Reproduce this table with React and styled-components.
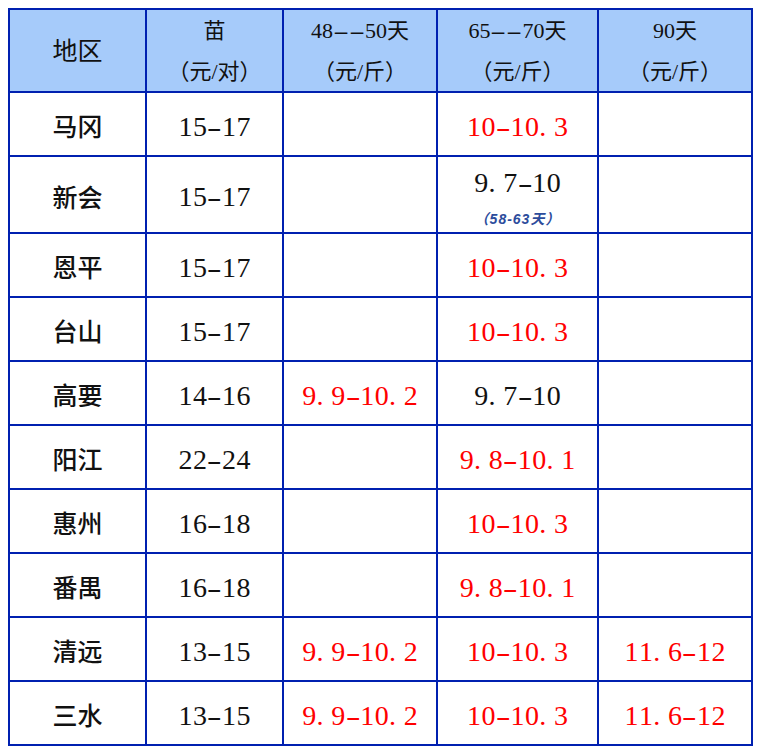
import React from "react";
import styled, { createGlobalStyle } from "styled-components";

const GlobalStyle = createGlobalStyle`
  body {
    margin: 8px;
    background: #ffffff;
    font-family: "Liberation Serif", "Noto Sans CJK SC", serif;
    color: #111111;
  }
`;

const Sheet = styled.div`
  display: grid;
  grid-template-columns: 135px 135px 152px 159px 152px;
  grid-template-rows: 81px 62px 75px repeat(8, 62px);
  gap: 2px;
  padding: 2px;
  width: max-content;
  background: #0020b0;
`;

const Cell = styled.div`
  display: flex;
  flex-direction: column;
  align-items: center;
  justify-content: center;
  background: ${(props) => (props.$head ? "#a6cbfa" : "#ffffff")};
  padding-top: ${(props) => (props.$head ? "0" : "5px")};
`;

const HeadLine = styled.div`
  font-size: 22px;
  line-height: 41px;
  white-space: nowrap;
`;

const RegionHead = styled.div`
  font-family: "Noto Sans CJK SC", sans-serif;
  font-size: 25px;
  line-height: 30px;
  margin-top: -4px;
`;

const Place = styled.div`
  font-family: "Noto Sans CJK SC", sans-serif;
  font-size: 25px;
  line-height: 28px;
  font-weight: 500;
  margin-top: -3px;
  color: #111111;
`;

const Value = styled.div`
  font-size: 28px;
  line-height: 28px;
  white-space: nowrap;
  color: ${(props) => (props.$red ? "#ff0000" : "#111111")};
`;

const Note = styled.div`
  font-family: "Liberation Sans", "Noto Sans CJK SC", sans-serif;
  font-size: 14px;
  font-style: italic;
  font-weight: bold;
  letter-spacing: 1px;
  line-height: 14px;
  margin-top: 15px;
  color: #2c4c9c;
`;

const Ch = styled.span`
  display: inline-block;
  width: ${(props) => (props.$w ? props.$w + "px" : "auto")};
  text-align: ${(props) => (props.$dot ? "left" : "center")};
`;

const Dash = styled(Ch)`
  transform: scaleX(${(props) => props.$stretch});
`;

// SimSun-like fixed width for ascii characters
const Mono = ({ text, w, dash = w, stretch = 1.6 }) =>
  [...text].map((c, i) => {
    const ascii = c.charCodeAt(0) < 128;
    if (c === "-")
      return (
        <Dash key={i} $w={dash} $stretch={stretch}>
          -
        </Dash>
      );
    return (
      <Ch key={i} $w={ascii ? w : null} $dot={c === "."}>
        {c}
      </Ch>
    );
  });

const rows = [
  { place: "马冈", seed: "15-17", d48: "", d65: "10-10.3", d90: "" },
  { place: "新会", seed: "15-17", d48: "", d65: "9.7-10", black: true, note: "（58-63天）", d90: "" },
  { place: "恩平", seed: "15-17", d48: "", d65: "10-10.3", d90: "" },
  { place: "台山", seed: "15-17", d48: "", d65: "10-10.3", d90: "" },
  { place: "高要", seed: "14-16", d48: "9.9-10.2", d65: "9.7-10", black: true, d90: "" },
  { place: "阳江", seed: "22-24", d48: "", d65: "9.8-10.1", d90: "" },
  { place: "惠州", seed: "16-18", d48: "", d65: "10-10.3", d90: "" },
  { place: "番禺", seed: "16-18", d48: "", d65: "9.8-10.1", d90: "" },
  { place: "清远", seed: "13-15", d48: "9.9-10.2", d65: "10-10.3", d90: "11.6-12" },
  { place: "三水", seed: "13-15", d48: "9.9-10.2", d65: "10-10.3", d90: "11.6-12" },
];

const headers = [
  ["苗", "（元/对）"],
  ["48--50天", "（元/斤）"],
  ["65--70天", "（元/斤）"],
  ["90天", "（元/斤）"],
];

const App = () => {
  return (
    <>
      <GlobalStyle />
      <Sheet>
        <Cell $head>
          <RegionHead>地区</RegionHead>
        </Cell>
        {headers.map(([top, unit]) => (
          <Cell $head key={top}>
            <HeadLine>
              <Mono text={top} w={11} dash={16} stretch={2.2} />
            </HeadLine>
            <HeadLine>{unit}</HeadLine>
          </Cell>
        ))}

        {rows.map((r) => (
          <React.Fragment key={r.place}>
            <Cell>
              <Place>{r.place}</Place>
            </Cell>
            <Cell>
              <Value>
                <Mono text={r.seed} w={14.5} />
              </Value>
            </Cell>
            <Cell>
              {r.d48 && (
                <Value $red>
                  <Mono text={r.d48} w={14.5} />
                </Value>
              )}
            </Cell>
            <Cell>
              <Value $red={!r.black}>
                <Mono text={r.d65} w={14.5} />
              </Value>
              {r.note && <Note>{r.note}</Note>}
            </Cell>
            <Cell>
              {r.d90 && (
                <Value $red>
                  <Mono text={r.d90} w={14.5} />
                </Value>
              )}
            </Cell>
          </React.Fragment>
        ))}
      </Sheet>
    </>
  );
};

export default App;
